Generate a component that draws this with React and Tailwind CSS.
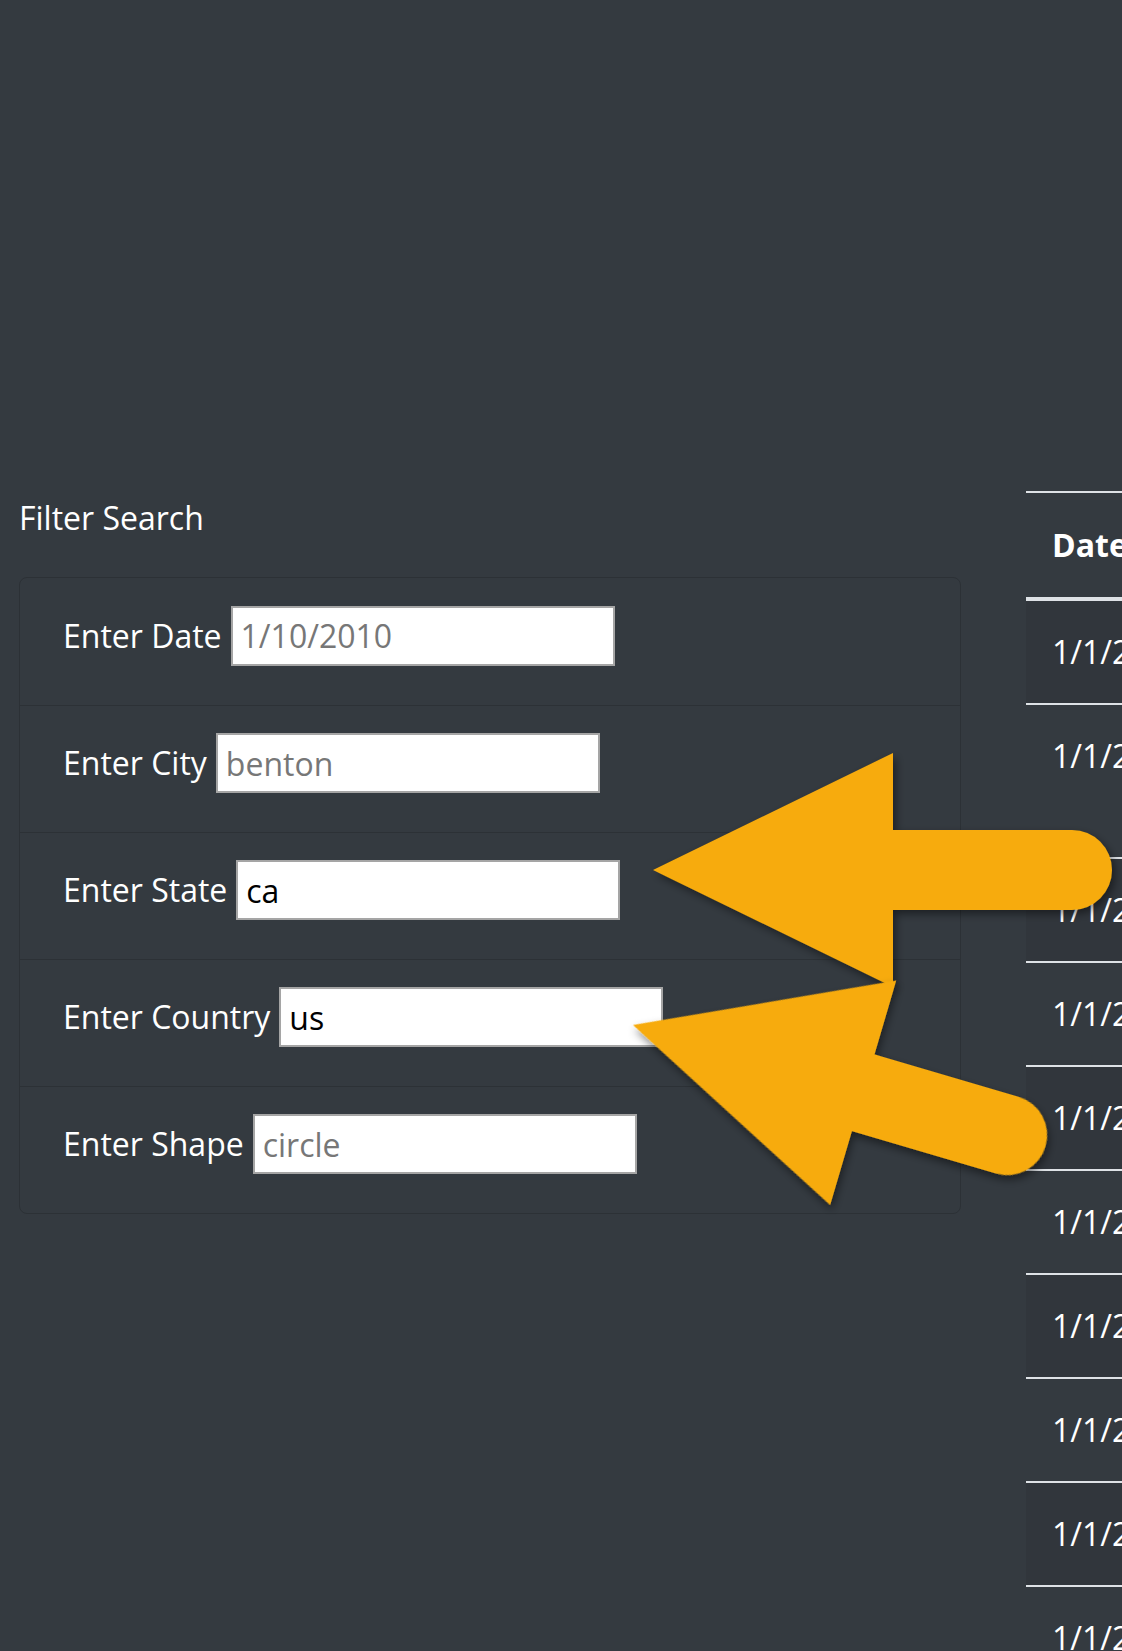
import { useState } from "react";

const fields = [
  { id: "datetime", label: "Enter Date", placeholder: "1/10/2010", value: "" },
  { id: "city", label: "Enter City", placeholder: "benton", value: "" },
  { id: "state", label: "Enter State", placeholder: "", value: "ca" },
  { id: "country", label: "Enter Country", placeholder: "", value: "us" },
  { id: "shape", label: "Enter Shape", placeholder: "circle", value: "" },
];

const sightings = [
  { date: "1/1/2010", city: "benton", state: "ar", country: "us", shape: "circle", duration: "5 mins.", comments: "4 bright green circles in the sky" },
  { date: "1/1/2010", city: "bonita", state: "ca", country: "us", shape: "light", duration: "13 minutes", comments: "Three bright red lights witnessed floating stationary over San Diego New Years Day 2010", tall: true },
  { date: "1/1/2010", city: "el cajon", state: "ca", country: "us", shape: "triangle", duration: "3 minutes", comments: "Bright orange lights" },
  { date: "1/1/2010", city: "el cajon", state: "ca", country: "us", shape: "unknown", duration: "1 minute", comments: "Orange lights over el cajon" },
  { date: "1/1/2010", city: "el cajon", state: "ca", country: "us", shape: "fireball", duration: "10 minutes", comments: "Fireballs moving east" },
  { date: "1/1/2010", city: "el cajon", state: "ca", country: "us", shape: "circle", duration: "5 minutes", comments: "Red circle of light" },
  { date: "1/1/2010", city: "lemon grove", state: "ca", country: "us", shape: "light", duration: "2 minutes", comments: "Two lights in the sky" },
  { date: "1/1/2010", city: "san diego", state: "ca", country: "us", shape: "light", duration: "15 minutes", comments: "Orange lights moving slowly" },
  { date: "1/1/2010", city: "san diego", state: "ca", country: "us", shape: "fireball", duration: "3 minutes", comments: "Five orange fireballs" },
  { date: "1/1/2010", city: "santee", state: "ca", country: "us", shape: "light", duration: "5 minutes", comments: "Lights over santee" },
];

const columns = ["Date", "City", "State", "Country", "Shape", "Duration", "Comments"];

// annotation arrows drawn over the screenshot
function Arrows() {
  const arrow = (len) =>
    `M0 0 L240 -117 L240 -40 L${len} -40 A40 40 0 0 1 ${len} 40 L240 40 L240 117 Z`;
  return (
    <svg
      className="absolute inset-0 pointer-events-none z-10"
      width="1122"
      height="1651"
      viewBox="0 0 1122 1651"
    >
      <defs>
        <filter id="arrowShadow" x="-20%" y="-20%" width="140%" height="140%">
          <feDropShadow dx="3" dy="4" stdDeviation="4" floodColor="#000" floodOpacity="0.45" />
        </filter>
      </defs>
      <path d={arrow(419)} transform="translate(653 870)" fill="#f7ab0b" filter="url(#arrowShadow)" />
      <path d={arrow(390)} transform="translate(633 1025) rotate(16.4)" fill="#f7ab0b" filter="url(#arrowShadow)" />
    </svg>
  );
}

export default function App() {
  const [values, setValues] = useState(
    Object.fromEntries(fields.map((f) => [f.id, f.value]))
  );

  return (
    <div className="relative w-[1122px] h-[1651px] overflow-hidden bg-[#343a40] text-white text-[32px] leading-[1.5] font-['Open_Sans',sans-serif]">
      <div className="flex pt-[491px] pl-[19px]">
        {/* FILTER FORM */}
        <aside className="w-[942px] shrink-0">
          <h5 className="mt-[3px] mb-[35px]">Filter Search</h5>
          <form className="rounded-[8px] border border-[#2c3136]">
            <ul>
              {fields.map((f, i) => (
                <li
                  key={f.id}
                  className={`flex items-center gap-[9px] h-[127px] pl-[43px] pb-[12px] ${
                    i > 0 ? "border-t border-[#2c3136]" : ""
                  }`}
                >
                  <label htmlFor={f.id}>{f.label}</label>
                  <input
                    id={f.id}
                    type="text"
                    placeholder={f.placeholder}
                    value={values[f.id]}
                    onChange={(e) =>
                      setValues((prev) => ({ ...prev, [f.id]: e.target.value }))
                    }
                    className="w-[384px] h-[60px] px-[8px] bg-white text-black border-2 border-[#a5a5a5] placeholder:text-[#777777] outline-none"
                  />
                </li>
              ))}
            </ul>
          </form>
        </aside>

        {/* RESULTS TABLE */}
        <div className="ml-[65px] shrink-0">
          <table className="border-separate border-spacing-0 text-left whitespace-nowrap">
            <thead>
              <tr>
                {columns.map((c) => (
                  <th
                    key={c}
                    className="px-[26px] py-[27px] leading-[50px] font-bold border-t-2 border-b-4 border-[#dee2e6] min-w-[220px]"
                  >
                    {c}
                  </th>
                ))}
              </tr>
            </thead>
            <tbody>
              {sightings.map((s, i) => (
                <tr
                  key={i}
                  className={`${i % 2 === 0 ? "bg-[#31363c]" : ""} ${
                    s.tall ? "h-[154px]" : ""
                  }`}
                >
                  {[s.date, s.city, s.state, s.country, s.shape, s.duration, s.comments].map(
                    (v, j) => (
                      <td
                        key={j}
                        className="px-[26px] py-[26px] leading-[50px] align-top border-b-2 border-[#dee2e6]"
                      >
                        {v}
                      </td>
                    )
                  )}
                </tr>
              ))}
            </tbody>
          </table>
        </div>
      </div>

      <Arrows />
    </div>
  );
}
